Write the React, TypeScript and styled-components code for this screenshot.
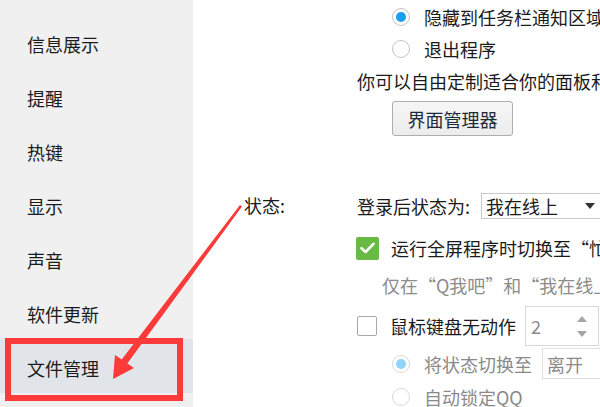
import React from "react";
import styled, { createGlobalStyle } from "styled-components";

const Global = createGlobalStyle`
  html, body { margin: 0; padding: 0; background: #ffffff; }
  body { font-family: "Noto Sans CJK SC", "Noto Sans", sans-serif; }
`;

const Frame = styled.div`
  position: relative;
  display: flex;
  width: 600px;
  height: 407px;
  overflow: hidden;
  color: #1b1b1b;
  font-size: 18px;
`;

const Sidebar = styled.nav`
  flex: 0 0 193px;
  background: #f0f0f0;
  padding-top: 15px;
  display: flex;
  flex-direction: column;
`;

const NavItem = styled.div<{ $active?: boolean }>`
  height: 54px;
  box-sizing: border-box;
  padding: 3px 0 0 27px;
  display: flex;
  align-items: center;
  white-space: nowrap;
  background: ${(p) => (p.$active ? "#e1e5ea" : "transparent")};
`;

const Main = styled.main`
  flex: 1;
  position: relative;
  background: #ffffff;
  padding: 1px 0 0 51px;
  overflow: hidden;
  white-space: nowrap;
`;

const TopSection = styled.section`
  margin-left: 113px;
  display: flex;
  flex-direction: column;
`;

const OptionRow = styled.div`
  display: flex;
  align-items: center;
  gap: 14px;
  height: 32px;
  padding-left: 35px;
`;

const Radio = styled.span<{ $checked?: boolean; $dim?: boolean }>`
  flex: 0 0 auto;
  width: 18px;
  height: 18px;
  border-radius: 50%;
  box-sizing: border-box;
  border: 1.5px solid ${(p) => (p.$dim ? "#dadada" : "#c4c4c4")};
  background: #ffffff;
  display: flex;
  align-items: center;
  justify-content: center;
  &::after {
    content: "";
    display: ${(p) => (p.$checked ? "block" : "none")};
    width: 10px;
    height: 10px;
    border-radius: 50%;
    background: ${(p) => (p.$dim ? "#8fd4fb" : "#1b9ff2")};
  }
`;

const Line = styled.div`
  height: 32px;
  display: flex;
  align-items: center;
`;

const Button = styled.button`
  margin: 4px 0 0 35px;
  align-self: flex-start;
  width: 121px;
  height: 35px;
  border: 1px solid #adadad;
  border-radius: 3px;
  background: linear-gradient(#f6f6f6, #ececec);
  color: #1c2a3a;
  font-family: inherit;
  font-size: 18px;
  padding: 0;
`;

const StatusGrid = styled.section`
  margin-top: 57px;
  display: grid;
  grid-template-columns: 113px auto;
`;

const Label = styled.div`
  height: 26px;
  line-height: 24px;
`;

const Column = styled.div`
  display: flex;
  flex-direction: column;
`;

const SelectRow = styled.div`
  display: flex;
  align-items: center;
  gap: 11px;
  height: 26px;
`;

const Select = styled.div<{ $w: number; $h: number; $muted?: boolean }>`
  flex: 0 0 auto;
  position: relative;
  width: ${(p) => p.$w}px;
  height: ${(p) => p.$h}px;
  box-sizing: border-box;
  border: 1px solid ${(p) => (p.$muted ? "#e0e0e0" : "#c9c9c9")};
  padding-left: 4px;
  display: flex;
  align-items: center;
  color: ${(p) => (p.$muted ? "#8a8a8a" : "inherit")};
`;

const Caret = styled.span`
  position: absolute;
  right: 10px;
  top: 9px;
  width: 0;
  height: 0;
  border-left: 5px solid transparent;
  border-right: 5px solid transparent;
  border-top: 6px solid #333333;
`;

const CheckRow = styled.div<{ $top: number; $h: number }>`
  display: flex;
  align-items: center;
  gap: 12px;
  margin-top: ${(p) => p.$top}px;
  height: ${(p) => p.$h}px;
`;

const CheckBox = styled.span<{ $checked?: boolean }>`
  flex: 0 0 auto;
  width: ${(p) => (p.$checked ? 23 : 20)}px;
  height: ${(p) => (p.$checked ? 23 : 20)}px;
  margin-left: ${(p) => (p.$checked ? -1 : 0)}px;
  margin-right: ${(p) => (p.$checked ? 0 : 1)}px;
  box-sizing: border-box;
  border-radius: 2px;
  border: ${(p) => (p.$checked ? "none" : "1.5px solid #a8a8a8")};
  background: ${(p) => (p.$checked ? "#69b944" : "#ffffff")};
  display: flex;
  align-items: center;
  justify-content: center;
`;

const Hint = styled.div`
  margin-top: 5px;
  height: 32px;
  display: flex;
  align-items: center;
  padding-left: 25px;
  color: #8c8c8c;
`;

const Spin = styled.div`
  flex: 0 0 auto;
  position: relative;
  width: 74px;
  height: 40px;
  margin-left: -3px;
  box-sizing: border-box;
  border: 1px solid #d8d8d8;
  padding-left: 5px;
  display: flex;
  align-items: center;
  color: #8a8a8a;
`;

const SpinArrow = styled.span<{ $up?: boolean }>`
  position: absolute;
  right: 11px;
  top: ${(p) => (p.$up ? 9 : 24)}px;
  width: 0;
  height: 0;
  border-left: 5px solid transparent;
  border-right: 5px solid transparent;
  ${(p) => (p.$up ? "border-bottom: 6px solid #a6a6a6;" : "border-top: 6px solid #a6a6a6;")}
`;

const SubRow = styled.div<{ $top: number; $h: number }>`
  display: flex;
  align-items: center;
  gap: 14px;
  margin-top: ${(p) => p.$top}px;
  height: ${(p) => p.$h}px;
  padding-left: 35px;
  color: #8a8a8a;
`;

const HighlightBox = styled.div`
  position: absolute;
  left: 5px;
  top: 338px;
  width: 178px;
  height: 63px;
  box-sizing: border-box;
  border: 6.5px solid #fb3a3a;
  pointer-events: none;
`;

const Overlay = styled.svg`
  position: absolute;
  left: 0;
  top: 0;
  width: 600px;
  height: 407px;
  pointer-events: none;
`;

const Check = () => (
  <svg width="15" height="12" viewBox="0 0 15 12">
    <path d="M1.5 6.2 L5.6 10 L13.5 1.8" fill="none" stroke="#ffffff" strokeWidth="2.6" strokeLinecap="round" strokeLinejoin="round" />
  </svg>
);

const navItems = ["信息展示", "提醒", "热键", "显示", "声音", "软件更新", "文件管理"];

export default function App() {
  return (
    <>
      <Global />
      <Frame>
        <Sidebar>
          {navItems.map((n) => (
            <NavItem key={n} $active={n === "文件管理"}>
              {n}
            </NavItem>
          ))}
        </Sidebar>
        <Main>
          <TopSection>
            <OptionRow>
              <Radio $checked />
              <span>隐藏到任务栏通知区域</span>
            </OptionRow>
            <OptionRow>
              <Radio />
              <span>退出程序</span>
            </OptionRow>
            <Line>你可以自由定制适合你的面板和窗口</Line>
            <Button>界面管理器</Button>
          </TopSection>
          <StatusGrid>
            <Label>状态:</Label>
            <Column>
              <SelectRow>
                <span>登录后状态为:</span>
                <Select $w={125} $h={26}>
                  我在线上
                  <Caret />
                </Select>
              </SelectRow>
              <CheckRow $top={13} $h={32}>
                <CheckBox $checked>
                  <Check />
                </CheckBox>
                <span>运行全屏程序时切换至“忙碌”</span>
              </CheckRow>
              <Hint>仅在“Q我吧”和“我在线上”状态下生效</Hint>
              <CheckRow $top={5} $h={40}>
                <CheckBox />
                <span>鼠标键盘无动作</span>
                <Spin>
                  2
                  <SpinArrow $up />
                  <SpinArrow />
                </Spin>
              </CheckRow>
              <SubRow $top={2} $h={31}>
                <Radio $checked $dim />
                <span>将状态切换至</span>
                <Select $w={80} $h={31} $muted style={{ marginLeft: -4 }}>
                  离开
                </Select>
              </SubRow>
              <SubRow $top={2} $h={32}>
                <Radio $dim />
                <span>自动锁定QQ</span>
              </SubRow>
            </Column>
          </StatusGrid>
        </Main>
        <HighlightBox />
        <Overlay viewBox="0 0 600 407">
          <polygon
            points="240,205 121.7,359.4 115,355 113,379 134,368 127.3,363.6 242,206.5"
            fill="#fb3a3a"
          />
        </Overlay>
      </Frame>
    </>
  );
}
